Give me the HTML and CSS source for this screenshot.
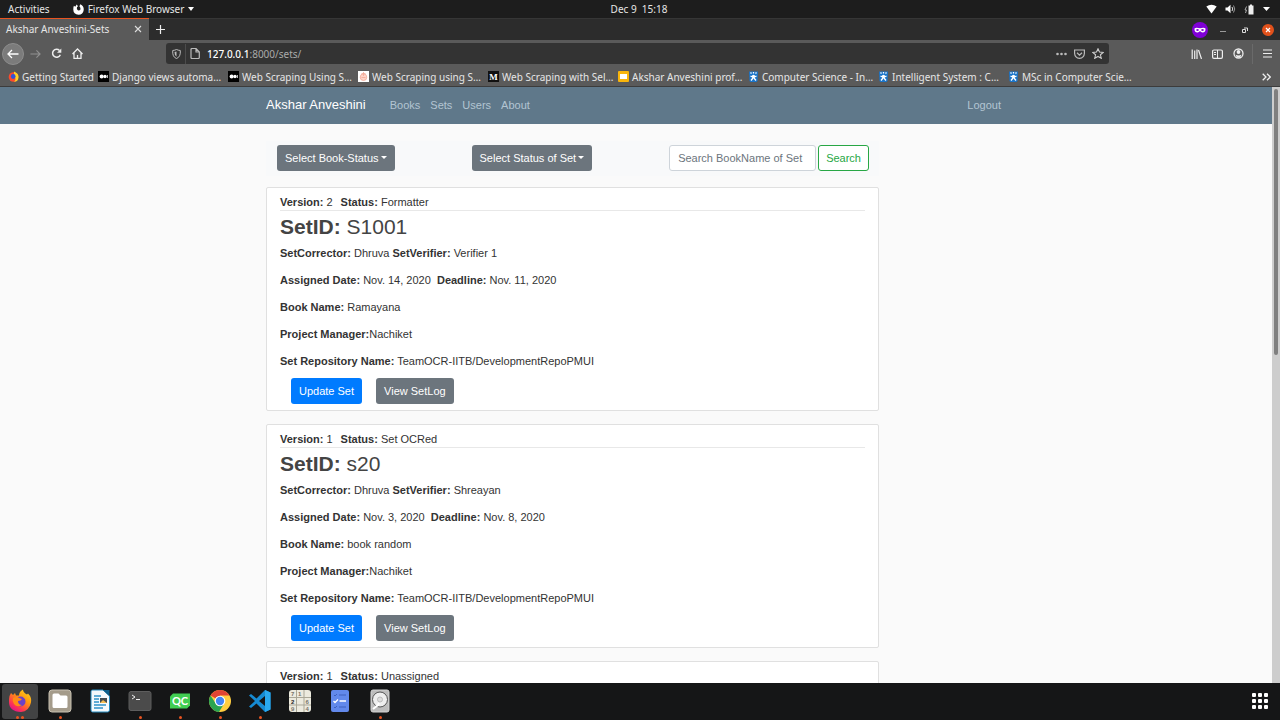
FILE: index.html
```html
<!DOCTYPE html>
<html lang="en">
<head>
<meta charset="utf-8">
<title>Akshar Anveshini-Sets</title>
<link rel="stylesheet" href="styles.css">
</head>
<body>
<svg width="0" height="0" class="defs" aria-hidden="true">
  <symbol id="medium" viewBox="0 0 11 11"><rect width="11" height="11" fill="#000"/><circle cx="3.6" cy="5.5" r="2" fill="#fff"/><circle cx="7" cy="5.5" r="1.7" fill="#fff"/><path d="M9.4 4v3" stroke="#fff" stroke-width=".8"/></symbol>
  <symbol id="crest" viewBox="0 0 11 11"><path d="M1 .5h9l-.5 9.500L8.500 11h-6l-1-1z" fill="#1b75c9"/><path d="M2.500 1.500l1 1M5.500 1v1.500M8.500 1.500l-1 1M2.500 5l2 1M8.500 5l-2 1M3 9.500L5 7M8 9.500L6 7" stroke="#fff" stroke-width="1.300" fill="none"/><circle cx="5.500" cy="5.500" r="1.700" fill="#fff"/></symbol>
</svg>

<header class="system">
  <div class="system-left">
    <button>Activities</button>
    <button class="app-menu">
      <svg width="11" height="11" viewBox="0 0 12 12"><path d="M1 2l1.500 1L4 .5 5.500 2.500Q4 3 4.200 5q.5 2.500 2.500 2 2.300-.8 1.300-3L7 2.500 8 .3Q12 2 11.700 6.500 11 11.500 6 11.700.5 11.500.3 6 .3 3.500 1 2z" fill="#fff"/></svg>
      Firefox Web Browser
      <svg width="6" height="4" viewBox="0 0 6 4"><path d="M0 0h6L3 4z" fill="#fff"/></svg>
    </button>
  </div>
  <time>Dec 9&nbsp; 15:18</time>
  <div class="system-right">
    <svg width="11" height="10" viewBox="0 0 11 10"><path d="M.3 2.600Q5.500-1 10.700 2.600L5.500 9.500z" fill="#fff"/></svg>
    <svg width="11" height="10" viewBox="0 0 11 10"><path d="M.5 3.500h2L5.500.8v8.400L2.500 6.500h-2z" fill="#fff"/><path d="M7 3q1.500 2 0 4" stroke="#ddd" fill="none"/><path d="M8.500 1.500q2.500 3.500 0 7" stroke="#999" fill="none"/></svg>
    <svg width="11" height="11" viewBox="0 0 11 11"><path d="M4.500 1.500H6V.5h2v1h1.500v9h-5z" fill="#eee"/><path d="M2.500 2.500L1 6h1.500L1.500 9" stroke="#aaa" fill="none"/></svg>
    <svg width="7" height="4" viewBox="0 0 7 4"><path d="M0 0h7L3.500 4z" fill="#fff"/></svg>
  </div>
</header>

<div class="tabs">
  <div class="tab"><span>Akshar Anveshini-Sets</span>
    <button aria-label="Close tab"><svg width="8" height="8" viewBox="0 0 8 8"><path d="M1 1l6 6M7 1L1 7" stroke="#ddd" stroke-width="1.100"/></svg></button>
  </div>
  <button class="new-tab" aria-label="New tab"><svg width="9" height="9" viewBox="0 0 9 9"><path d="M4.500 0v9M0 4.500h9" stroke="#eee" stroke-width="1.200"/></svg></button>
  <div class="window-controls">
    <svg width="16" height="16" viewBox="0 0 16 16"><circle cx="8" cy="8" r="8" fill="#8000d7"/><path d="M2.500 6.500Q4 5 8 6.300 12 5 13.500 6.500q.3 4-3 4Q9 10.300 8 9q-1 1.300-2.500 1.500-3.300 0-3-4z" fill="#fff"/><ellipse cx="5.500" cy="8" rx="1.300" ry=".9" fill="#8000d7"/><ellipse cx="10.500" cy="8" rx="1.300" ry=".9" fill="#8000d7"/></svg>
    <button aria-label="Minimize"><svg width="6" height="6" viewBox="0 0 6 6"><path d="M0 4.500h6" stroke="#999"/></svg></button>
    <button aria-label="Restore"><svg width="6" height="6" viewBox="0 0 6 6"><path d="M.5 2.500h3v3h-3zM2 1h3.500v3" stroke="#ddd" fill="none"/></svg></button>
    <button aria-label="Close"><svg width="12" height="12" viewBox="0 0 12 12"><circle cx="6" cy="6" r="6" fill="#e2511b"/><path d="M4 4l4 4M8 4L4 8" stroke="#fff" stroke-width="1.200"/></svg></button>
  </div>
</div>

<div class="toolbar">
  <div class="nav-buttons">
    <button class="back" aria-label="Back"><svg width="12" height="10" viewBox="0 0 12 10"><path d="M11.500 5H1M5 1L1 5l4 4" stroke="#fff" stroke-width="1.300" fill="none"/></svg></button>
    <button aria-label="Forward"><svg width="11" height="10" viewBox="0 0 12 10"><path d="M.5 5H11M7 1l4 4-4 4" stroke="#919191" stroke-width="1.200" fill="none"/></svg></button>
    <button aria-label="Reload"><svg width="11" height="11" viewBox="0 0 11 11"><path d="M8.500 2.500A4 4 0 1 0 9.300 6.800" stroke="#eee" stroke-width="1.500" fill="none"/><path d="M10.300.5v4.300H6z" fill="#eee"/></svg></button>
    <button aria-label="Home"><svg width="11" height="11" viewBox="0 0 11 11"><path d="M.5 6l5-5 5 5M2 5v5.300h7V5M5.500 10V7" stroke="#eee" stroke-width="1.300" fill="none"/></svg></button>
  </div>
  <div class="address">
    <svg width="9" height="10" viewBox="0 0 9 10"><path d="M.7 1.500Q3 1.300 4.500.5 6 1.300 8.300 1.500 8.800 8 4.500 9.500.2 8 .7 1.500z" fill="none" stroke="#bbb"/><path d="M4.500 2.500L2.500 3q0 3.500 2 4.700z" fill="#bbb"/></svg>
    <i class="divider"></i>
    <svg width="10" height="11" viewBox="0 0 10 11"><path d="M1 1.500q0-1 1-1h4L9.300 4v5.500q0 1-1 1H2q-1 0-1-1zM6 .5V4h3.300" fill="none" stroke="#bbb" stroke-width="1.200"/></svg>
    <span class="url"><b>127.0.0.1</b>:8000/sets/</span>
    <svg width="11" height="4" viewBox="0 0 11 4"><g fill="#bbb"><circle cx="1.500" cy="2" r="1.300"/><circle cx="5.500" cy="2" r="1.300"/><circle cx="9.500" cy="2" r="1.300"/></g></svg>
    <svg width="11" height="10" viewBox="0 0 11 10"><path d="M.6 1h9.800v3.500Q10 9 5.500 9.300 1 9 .6 4.500zM3 3.700l2.500 2.400L8 3.700" fill="none" stroke="#bbb" stroke-width="1.200"/></svg>
    <svg width="12" height="11" viewBox="0 0 12 11"><path d="M6 .8l1.500 3.300 3.700.3-2.800 2.400.9 3.500L6 8.400l-3.300 1.900.9-3.500L.8 4.400l3.700-.3z" fill="none" stroke="#ccc" stroke-width="1.100"/></svg>
  </div>
  <div class="tools">
    <svg width="11" height="10" viewBox="0 0 11 10"><path d="M1.200.5V10M3.700 1.500V10M6 .5V10M7.500 1l3 9" stroke="#eee" stroke-width="1.200"/></svg>
    <svg width="11" height="10" viewBox="0 0 11 10"><rect x=".6" y="1" width="9.800" height="8.300" rx="1.300" fill="none" stroke="#eee" stroke-width="1.200"/><path d="M5.500 1v8M2 3.500h2M2 5.500h2" stroke="#eee"/></svg>
    <svg width="11" height="11" viewBox="0 0 11 11"><circle cx="5.500" cy="5.500" r="4.500" fill="none" stroke="#eee" stroke-width="1.300"/><circle cx="5.500" cy="4" r="1.900" fill="#eee"/><path d="M2.500 6.700q3 1.600 6 0-.6 2.800-3 2.800t-3-2.800z" fill="#eee"/></svg>
    <i class="divider"></i>
    <svg width="9" height="9" viewBox="0 0 9 9"><path d="M0 1h9M0 4.500h9M0 8h9" stroke="#eee" stroke-width="1.200"/></svg>
  </div>
</div>

<nav class="bookmarks">
  <a class="short" href="#"><svg width="11" height="11" viewBox="0 0 11 11"><circle cx="5.500" cy="6" r="4.800" fill="#ff4a2b"/><path d="M6 .5q5 2 4.500 6Q10 11 6 10.800 9 8 6 5z" fill="#ffcf26"/><circle cx="5.200" cy="5.500" r="2.400" fill="#3453d6"/></svg>Getting Started</a>
  <a href="#"><svg width="11" height="11"><use href="#medium"/></svg>Django views automa…</a>
  <a href="#"><svg width="11" height="11"><use href="#medium"/></svg>Web Scraping Using S…</a>
  <a href="#"><svg width="11" height="11" viewBox="0 0 11 11"><rect width="11" height="11" fill="#fff"/><circle cx="5.500" cy="6.200" r="3.300" fill="#ffd4c8" stroke="#f3a895" stroke-width=".8"/><path d="M5.500 1v4M3.500 2.500h4M3.500 6.500h4" stroke="#f3a895" stroke-width=".8"/></svg>Web Scraping using S…</a>
  <a href="#"><svg width="11" height="11" viewBox="0 0 11 11"><rect width="11" height="11" fill="#111"/><text x="5.500" y="9" class="m-letter">M</text></svg>Web Scraping with Sel…</a>
  <a href="#"><svg width="11" height="11" viewBox="0 0 11 11"><rect width="11" height="11" rx="1" fill="#f9b50b"/><rect x="2" y="3" width="7" height="5" fill="#fff"/></svg>Akshar Anveshini prof…</a>
  <a href="#"><svg width="11" height="11"><use href="#crest"/></svg>Computer Science - In…</a>
  <a href="#"><svg width="11" height="11"><use href="#crest"/></svg>Intelligent System : C…</a>
  <a href="#"><svg width="11" height="11"><use href="#crest"/></svg>MSc in Computer Scie…</a>
  <button aria-label="More bookmarks"><svg width="9" height="8" viewBox="0 0 9 8"><path d="M.7.7L4 4 .7 7.300M5 .7L8.300 4 5 7.300" stroke="#eee" stroke-width="1.300" fill="none"/></svg></button>
</nav>

<div class="viewport">
  <div class="page">
    <nav class="navbar">
      <div class="container">
        <a class="brand" href="#">Akshar Anveshini</a>
        <a href="#">Books</a><a href="#">Sets</a><a href="#">Users</a><a href="#">About</a>
        <a class="logout" href="#">Logout</a>
      </div>
    </nav>
    <main class="container">
      <div class="column">
        <form class="filters">
          <button type="button" class="btn grey caret">Select Book-Status</button>
          <button type="button" class="btn grey caret">Select Status of Set</button>
          <div class="search">
            <input type="text" aria-label="Search BookName of Set" placeholder="Search BookName of Set">
            <button type="button" class="btn outline">Search</button>
          </div>
        </form>
        <article class="card">
          <div class="meta"><span><b>Version:</b> 2</span><span><b>Status:</b> Formatter</span></div>
          <h2><b>SetID:</b> S1001</h2>
          <p><b>SetCorrector:</b> Dhruva <b>SetVerifier:</b> Verifier 1</p>
          <p><b>Assigned Date:</b> Nov. 14, 2020 &nbsp;<b>Deadline:</b> Nov. 11, 2020</p>
          <p><b>Book Name:</b> Ramayana</p>
          <p><b>Project Manager:</b>Nachiket</p>
          <p><b>Set Repository Name:</b> TeamOCR-IITB/DevelopmentRepoPMUI</p>
          <div class="actions"><button class="btn blue">Update Set</button><button class="btn grey">View SetLog</button></div>
        </article>
        <article class="card">
          <div class="meta"><span><b>Version:</b> 1</span><span><b>Status:</b> Set OCRed</span></div>
          <h2><b>SetID:</b> s20</h2>
          <p><b>SetCorrector:</b> Dhruva <b>SetVerifier:</b> Shreayan</p>
          <p><b>Assigned Date:</b> Nov. 3, 2020 &nbsp;<b>Deadline:</b> Nov. 8, 2020</p>
          <p><b>Book Name:</b> book random</p>
          <p><b>Project Manager:</b>Nachiket</p>
          <p><b>Set Repository Name:</b> TeamOCR-IITB/DevelopmentRepoPMUI</p>
          <div class="actions"><button class="btn blue">Update Set</button><button class="btn grey">View SetLog</button></div>
        </article>
        <article class="card">
          <div class="meta"><span><b>Version:</b> 1</span><span><b>Status:</b> Unassigned</span></div>
        </article>
      </div>
    </main>
  </div>
  <div class="scrollbar"><div class="thumb"></div></div>
</div>

<footer class="dock">
  <button class="app active two" aria-label="Firefox"><svg width="24" height="24" viewBox="0 0 24 24"><defs><linearGradient id="fx" x1="1" y1="0" x2=".3" y2="1"><stop offset="0" stop-color="#ffe226"/><stop offset=".45" stop-color="#ff980e"/><stop offset=".8" stop-color="#ff3750"/><stop offset="1" stop-color="#e31587"/></linearGradient></defs><path d="M1.500 7L3 4l2 2 2-2 1 2.500h3q0-4 4-6 0 3 4 5l1-1q4 4 3 9-2 9-10 9.500Q1 22.500 1 13 1 9 1.500 7z" fill="url(#fx)"/><circle cx="12.500" cy="12.500" r="5" fill="#6b42c8"/><path d="M5 9q4-2 6 0l3 1q-1 2-4 2 0 4 4 4-5 3-8-1-2-3-1-6z" fill="#ff8b16"/></svg></button>
  <button class="app running" aria-label="Files"><svg width="24" height="24" viewBox="0 0 24 24"><rect x="1" y="1" width="22" height="22" rx="3" fill="#a49b8a" stroke="#c9c2b3"/><path d="M4.500 6q0-1.500 1.500-1.500h4.500l2 2H18q1.500 0 1.500 1.500v9.500q0 1.500-1.500 1.500H6q-1.500 0-1.500-1.500z" fill="#fff"/></svg></button>
  <button class="app" aria-label="Writer"><svg width="24" height="24" viewBox="0 0 24 24"><path d="M4.500 1H15l6.500 6v14q0 2-2 2h-15Q3 23 3 21V2.500Q3 1 4.500 1z" fill="#f4f9fc" stroke="#2589bd"/><path d="M15 1h6.500v6z" fill="#0d5f8c"/><path d="M6 7h7M6 10h5M6 13h5M6 16h12M6 19h9" stroke="#2f92c8" stroke-width="1.300"/><path d="M12 9h7v5h-7z" fill="#424b51"/><path d="M12 14l3-3 4 3z" fill="#f4bd53"/></svg></button>
  <button class="app running" aria-label="Terminal"><svg width="24" height="24" viewBox="0 0 24 24"><rect x="1" y="2.500" width="22" height="19" rx="2" fill="#4b4b4b" stroke="#5d5d5d"/><path d="M4 6l3 2-3 2M8 10.500h4" stroke="#eee" fill="none"/></svg></button>
  <button class="app running" aria-label="Qt Creator"><svg width="24" height="24" viewBox="0 0 24 24"><path d="M5 4.500h17v12l-3 3H2v-12z" fill="#41cd52"/><text x="12" y="16" class="qc">QC</text></svg></button>
  <button class="app running" aria-label="Chrome"><svg width="24" height="24" viewBox="0 0 24 24"><circle cx="12" cy="12" r="11" fill="#ffcd40"/><path d="M12 12L2.500 6.500A11 11 0 0 1 21.500 6.500H12z" fill="#e04434"/><path d="M2.500 6.500A11 11 0 0 0 11 23l5.500-9-9 0z" fill="#2aa452"/><circle cx="12" cy="12" r="5.300" fill="#fff"/><circle cx="12" cy="12" r="4.200" fill="#4285f4"/></svg></button>
  <button class="app running" aria-label="Visual Studio Code"><svg width="24" height="24" viewBox="0 0 24 24"><path d="M17 1l5.500 2.500v17L17 23 8.500 14.500 3 19 1 17.500 7 12 1 6.500 3 5l5.500 4.500zM17 7l-6 5 6 5z" fill="#168bd3" fill-rule="evenodd"/><path d="M17 1l5.500 2.500v17L17 23z" fill="#2aa9ef"/></svg></button>
  <button class="app" aria-label="Sudoku"><svg width="24" height="24" viewBox="0 0 24 24"><rect x="1" y="1" width="22" height="22" rx="3" fill="#eceade"/><path d="M8.500 1v22M16 1v22M1 8.500h22M1 16h22" stroke="#aaa797"/><g class="digits"><text x="3" y="7">7</text><text x="10" y="7">1</text><text x="3" y="15" class="dark">2</text><text x="17.500" y="15">6</text><text x="3" y="22">9</text><text x="17.500" y="22">4</text></g></svg></button>
  <button class="app" aria-label="To Do"><svg width="24" height="24" viewBox="0 0 24 24"><rect x="3" y="1" width="18" height="22" rx="2" fill="#6289eb"/><path d="M6 6l1 1 2-2M11 6h7M6 18l1 1 2-2M11 18h7" stroke="#3f61bd" fill="none"/><path d="M5.500 12l1.500 1.500 3-3M11.500 12H18" stroke="#fff" stroke-width="1.300" fill="none"/></svg></button>
  <button class="app running" aria-label="Disks"><svg width="24" height="24" viewBox="0 0 24 24"><rect x="3" y="1" width="18" height="22" rx="2" fill="#bcbcbc" stroke="#d4d4d4"/><circle cx="12" cy="10.500" r="7.500" fill="#eee" stroke="#555"/><circle cx="12" cy="10.500" r="2.500" fill="#ddd" stroke="#bbb"/><path d="M5 20l5-4 1-2" stroke="#fff" stroke-width="2" fill="none"/></svg></button>
  <button class="app grid-button" aria-label="Show applications"><svg width="16" height="16" viewBox="0 0 16 16"><g fill="#fff"><rect x="0" y="0" width="4" height="4" rx="1"/><rect x="6" y="0" width="4" height="4" rx="1"/><rect x="12" y="0" width="4" height="4" rx="1"/><rect x="0" y="6" width="4" height="4" rx="1"/><rect x="6" y="6" width="4" height="4" rx="1"/><rect x="12" y="6" width="4" height="4" rx="1"/><rect x="0" y="12" width="4" height="4" rx="1"/><rect x="6" y="12" width="4" height="4" rx="1"/><rect x="12" y="12" width="4" height="4" rx="1"/></g></svg></button>
</footer>
</body>
</html>
```
FILE: styles.css
```css
* { box-sizing: border-box; }
body {
  margin: 0;
  height: 100vh;
  display: flex;
  flex-direction: column;
  overflow: hidden;
  font: 10px/14px "Noto Sans", "Open Sans", sans-serif;
  color: #e6e6e6;
}
button {
  margin: 0;
  padding: 0;
  border: 0;
  background: none;
  color: inherit;
  font: inherit;
}
a { color: inherit; text-decoration: none; }
svg { display: block; flex: none; }
.defs { position: absolute; }
.m-letter { font: bold 9px "Liberation Serif", serif; fill: #fff; text-anchor: middle; }
.qc { font: bold 11px Lato, sans-serif; fill: #fff; text-anchor: middle; }
.digits { font: bold 6px "Liberation Sans", sans-serif; fill: #77746a; }
.dark { fill: #222; }

.system {
  flex: none;
  height: 18px;
  display: grid;
  grid-template-columns: 1fr auto 1fr;
  align-items: center;
  padding: 0 10px 0 8px;
  background: #1d1d1d;
}
.system-left { display: flex; gap: 23px; }
.app-menu { display: flex; align-items: center; gap: 4px; }
.system-right { display: flex; align-items: center; justify-content: flex-end; gap: 8px; }

.tabs {
  flex: none;
  height: 22px;
  display: flex;
  background: #2c2c2c;
  border-top: 1px solid #363636;
}
.tab {
  width: 149px;
  margin-top: -1px;
  padding: 0 7px 1px 6px;
  display: flex;
  align-items: center;
  justify-content: space-between;
  background: #5a5a5a;
  border-top: 1px solid #e95420;
}
.new-tab { margin-left: 7px; }
.window-controls { margin-left: auto; padding-right: 6px; display: flex; align-items: center; }
.window-controls button { margin-left: 12px; }
.window-controls button + button { margin-left: 16px; }
.window-controls button:last-child { margin-left: 14px; }

.toolbar {
  flex: none;
  height: 27px;
  display: flex;
  align-items: center;
  background: #5a5a5a;
}
.nav-buttons { width: 166px; padding-left: 2px; display: flex; align-items: center; gap: 10px; }
.back {
  width: 22px;
  height: 22px;
  margin-right: -4px;
  display: grid;
  place-items: center;
  border: 1px solid #8d8d8d;
  border-radius: 50%;
  background: #7b7b7b;
}
.address {
  flex: 1;
  height: 21px;
  padding: 0 5px 0 6px;
  display: flex;
  align-items: center;
  gap: 7px;
  border-radius: 3px;
  background: #333;
}
.divider { width: 1px; height: 20px; background: #4c4c4c; }
.address .divider { margin: 0 -3px; }
.url { flex: 1; color: #aaa; }
.url b { font-weight: 500; color: #fff; }
.tools { width: 171px; padding-right: 8px; display: flex; align-items: center; justify-content: flex-end; gap: 10px; }
.tools .divider { margin-left: -2px; background: #6a6a6a; }

.bookmarks {
  flex: none;
  height: 20px;
  padding: 0 9px 0 8px;
  display: flex;
  align-items: center;
  background: #5a5a5a;
  border-bottom: 1px solid #3c3c3c;
}
.bookmarks a { width: 130px; display: flex; align-items: center; gap: 3px; white-space: nowrap; }
.bookmarks .short { width: 90px; }
.bookmarks button { margin-left: auto; }

.viewport { flex: 1; min-height: 0; display: flex; background: #fafafa; }
.page {
  flex: 1;
  overflow: hidden;
  color: #333;
  font: 11px/16px "Liberation Sans", Arial, sans-serif;
}
.scrollbar { width: 8px; padding: 2px; background: #cdcdcd; }
.thumb { height: 45%; border-radius: 2px; background: #7f7f7f; }

.container { max-width: 760px; margin: 0 auto; padding: 0 10px; }
.navbar { background: #5f788a; color: #b3c5d2; }
.navbar .container { height: 37px; padding-bottom: 1px; display: flex; align-items: center; gap: 10px; }
.navbar .brand { margin-right: 14px; font-size: 13px; color: #fff; }
.navbar .logout { margin-left: auto; padding-right: 5px; }

.column { width: 613px; max-width: 100%; }
.filters {
  margin: 17px 0 11px;
  padding: 4px 10px 5px 11px;
  display: flex;
  justify-content: space-between;
  background: #f8f9fa;
}
.btn {
  height: 26px;
  padding: 0 7px;
  border: 1px solid transparent;
  border-radius: 3px;
  line-height: 24px;
  white-space: nowrap;
}
.grey { background: #6c757d; color: #fff; }
.blue { background: #007bff; color: #fff; }
.outline { border-color: #28a745; color: #28a745; background: #fff; }
.caret::after {
  content: "";
  display: inline-block;
  margin-left: 2px;
  vertical-align: 3px;
  border: 3px solid transparent;
  border-top-color: #fff;
  border-bottom: 0;
}
.search { display: flex; gap: 2px; }
.search input {
  width: 147px;
  height: 26px;
  padding: 0 8px;
  border: 1px solid #ced4da;
  border-radius: 3px;
  background: #fff;
  font: inherit;
}
.search input::placeholder { color: #6c757d; opacity: 1; }

.card {
  margin-bottom: 13px;
  padding: 6px 13px;
  border: 1px solid #e0e0e0;
  border-radius: 2px;
  background: #fff;
}
.meta { display: flex; gap: 8px; border-bottom: 1px solid #e8e8e8; }
.card h2 { margin: 3px 0 5px; font-size: 21px; line-height: 26px; font-weight: 400; color: #444; }
.card p { margin: 0 0 11px; }
.actions { display: flex; gap: 14px; margin-top: -2px; padding-left: 11px; }

.dock {
  flex: none;
  height: 37px;
  padding: 0 2px 1px;
  display: flex;
  align-items: center;
  gap: 4px;
  background: #151617;
}
.app {
  width: 36px;
  height: 35px;
  display: grid;
  place-items: center;
  position: relative;
  border-radius: 3px;
}
.active { background: #424344; }
.running::after, .two::after {
  content: "";
  position: absolute;
  bottom: 0;
  left: 17px;
  width: 3px;
  height: 3px;
  border-radius: 50%;
  background: #e95420;
}
.two::after { left: 14px; box-shadow: 5px 0 #e95420; }
.grid-button { margin-left: auto; }
```
